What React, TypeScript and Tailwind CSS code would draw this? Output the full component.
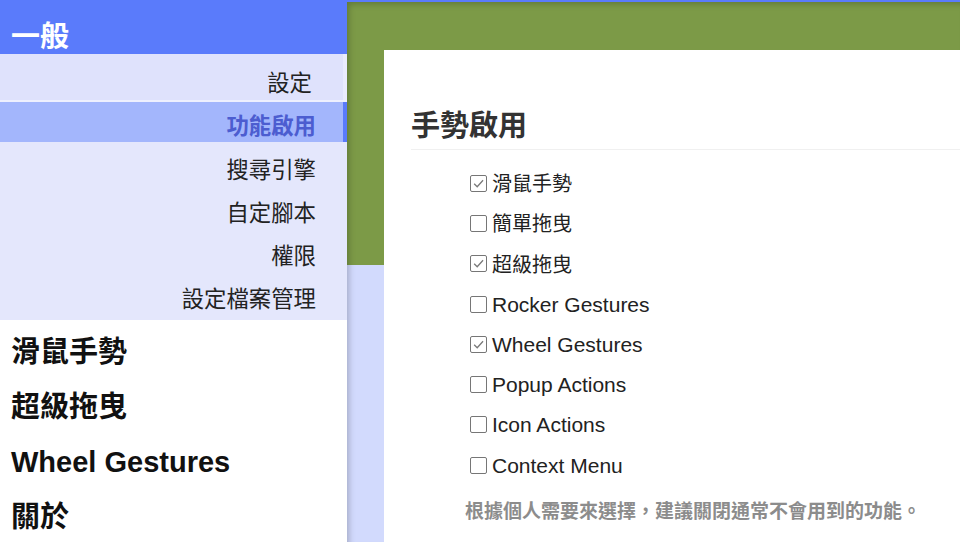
import React from "react";

const subItems = ["搜尋引擎", "自定腳本", "權限", "設定檔案管理"];
const bottomItems = ["滑鼠手勢", "超級拖曳", "Wheel Gestures", "關於"];
const options: { label: string; checked: boolean; cjk: boolean }[] = [
  { label: "滑鼠手勢", checked: true, cjk: true },
  { label: "簡單拖曳", checked: false, cjk: true },
  { label: "超級拖曳", checked: true, cjk: true },
  { label: "Rocker Gestures", checked: false, cjk: false },
  { label: "Wheel Gestures", checked: true, cjk: false },
  { label: "Popup Actions", checked: false, cjk: false },
  { label: "Icon Actions", checked: false, cjk: false },
  { label: "Context Menu", checked: false, cjk: false },
];

function Box({ checked }: { checked: boolean }) {
  return (
    <span className="w-[17px] h-[17px] border border-[#767676] rounded-[2px] bg-white flex items-center justify-center shrink-0">
      {checked && (
        <svg width="13" height="13" viewBox="0 0 12 12">
          <path d="M2 6.2 L4.8 9 L10.2 3" fill="none" stroke="#7a7a7a" strokeWidth="1.2" />
        </svg>
      )}
    </span>
  );
}

export default function App() {
  return (
    <div className="w-[960px] h-[542px] overflow-hidden flex flex-col bg-white font-['Liberation_Sans','Noto_Sans_CJK_TC',sans-serif]">
      <div className="h-[2px] bg-[#5a7bfb] shrink-0" />
      <div className="flex flex-1 min-h-0">
        <aside className="w-[347px] shrink-0 flex flex-col bg-white overflow-hidden">
          <div className="h-[52px] shrink-0 bg-[#5a7bfb] pl-[11px] pt-[19px] flex items-center text-white text-[29px] font-bold leading-none">
            一般
          </div>
          <div className="bg-[#e4e7fc] flex flex-col shrink-0">
            <div className="h-[46px] shrink-0 pt-[14px] pr-[31px] flex items-center justify-end text-[22.4px] leading-none text-[#222] bg-[#dfe2fc] border-r-[4px] border-[#e9ebfd]">
              設定
            </div>
            <div className="h-[2px] shrink-0 bg-[#eef0fe]" />
            <div className="h-[40px] shrink-0 pt-[10px] pr-[27px] flex items-center justify-end text-[22.4px] leading-none font-bold text-[#4c5dd0] bg-[#a3b6fc] border-r-[4px] border-[#5a7bfb]">
              功能啟用
            </div>
            <div className="pt-[6px] flex flex-col shrink-0">
              {subItems.map((s) => (
                <div key={s} className="h-[43px] shrink-0 pt-[3px] pr-[31px] flex items-center justify-end text-[22.4px] leading-none text-[#222]">
                  {s}
                </div>
              ))}
            </div>
          </div>
          <div className="pt-[5px] flex flex-col shrink-0">
            {bottomItems.map((s) => (
              <div key={s} className="h-[55px] shrink-0 pl-[11px] flex items-center text-[29px] font-bold leading-none text-[#111]">
                {s}
              </div>
            ))}
          </div>
        </aside>
        <main className="flex-1 flex flex-col bg-[linear-gradient(to_bottom,#7c9a47_263px,#d2dafd_263px)] shadow-[inset_4px_4px_6px_-2px_rgba(0,0,0,0.22)]">
          <div className="mt-[48px] ml-[37px] flex-1 bg-white pl-[27px] flex flex-col">
            <div className="mt-[50px] h-[50px] pt-[4px] flex items-center border-b border-[#f0f0f0] text-[29px] font-bold leading-none text-[#333]">
              手勢啟用
            </div>
            <div className="mt-[13px] pl-[59px] flex flex-col">
              {options.map((o) => (
                <div key={o.label} className="h-[40.3px] flex items-center gap-[5px]">
                  <Box checked={o.checked} />
                  <span className={`${o.cjk ? "text-[20px] pt-[2px]" : "text-[21px]"} leading-none text-[#222]`}>{o.label}</span>
                </div>
              ))}
            </div>
            <div className="mt-[13px] pl-[54px] h-[24px] pt-[2px] flex items-center text-[19px] font-bold leading-none text-[#8c8c8c]">
              根據個人需要來選擇，建議關閉通常不會用到的功能。
            </div>
          </div>
        </main>
      </div>
    </div>
  );
}
